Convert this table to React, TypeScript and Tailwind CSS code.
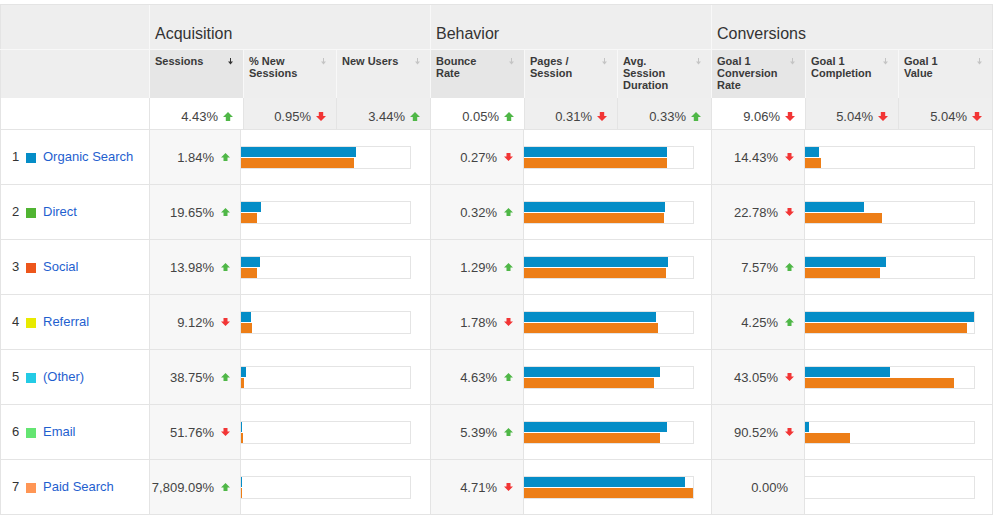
import React from "react";

type Dir = "up" | "down" | null;
type Cell = { v: string; a: Dir; b: [number, number] };
type Row = { n: number; color: string; label: string; g: Cell[] };

const rows: Row[] = [
  { n: 1, color: "#058dc7", label: "Organic Search", g: [
    { v: "1.84%", a: "up", b: [115, 113] },
    { v: "0.27%", a: "down", b: [143, 143] },
    { v: "14.43%", a: "down", b: [14, 16] },
  ] },
  { n: 2, color: "#50b432", label: "Direct", g: [
    { v: "19.65%", a: "up", b: [20, 16] },
    { v: "0.32%", a: "up", b: [141, 140] },
    { v: "22.78%", a: "down", b: [59, 77] },
  ] },
  { n: 3, color: "#ed561b", label: "Social", g: [
    { v: "13.98%", a: "up", b: [19, 16] },
    { v: "1.29%", a: "up", b: [144, 142] },
    { v: "7.57%", a: "up", b: [81, 75] },
  ] },
  { n: 4, color: "#e8ea00", label: "Referral", g: [
    { v: "9.12%", a: "down", b: [10, 11] },
    { v: "1.78%", a: "down", b: [132, 134] },
    { v: "4.25%", a: "up", b: [169, 162] },
  ] },
  { n: 5, color: "#24cbe5", label: "(Other)", g: [
    { v: "38.75%", a: "up", b: [5, 3] },
    { v: "4.63%", a: "up", b: [136, 130] },
    { v: "43.05%", a: "down", b: [85, 149] },
  ] },
  { n: 6, color: "#64e572", label: "Email", g: [
    { v: "51.76%", a: "down", b: [1, 2] },
    { v: "5.39%", a: "up", b: [143, 136] },
    { v: "90.52%", a: "down", b: [4, 45] },
  ] },
  { n: 7, color: "#ff9655", label: "Paid Search", g: [
    { v: "7,809.09%", a: "up", b: [1, 1] },
    { v: "4.71%", a: "down", b: [161, 169] },
    { v: "0.00%", a: null, b: [0, 0] },
  ] },
];

const groups = [
  {
    title: "Acquisition",
    cols: [
      { lines: ["Sessions"], sorted: true },
      { lines: ["% New", "Sessions"], sorted: false },
      { lines: ["New Users"], sorted: false },
    ],
    sums: [
      { v: "4.43%", a: "up" as Dir },
      { v: "0.95%", a: "down" as Dir },
      { v: "3.44%", a: "up" as Dir },
    ],
  },
  {
    title: "Behavior",
    cols: [
      { lines: ["Bounce", "Rate"], sorted: false },
      { lines: ["Pages /", "Session"], sorted: false },
      { lines: ["Avg.", "Session", "Duration"], sorted: false },
    ],
    sums: [
      { v: "0.05%", a: "up" as Dir },
      { v: "0.31%", a: "down" as Dir },
      { v: "0.33%", a: "up" as Dir },
    ],
  },
  {
    title: "Conversions",
    cols: [
      { lines: ["Goal 1", "Conversion", "Rate"], sorted: false },
      { lines: ["Goal 1", "Completion"], sorted: false },
      { lines: ["Goal 1", "Value"], sorted: false },
    ],
    sums: [
      { v: "9.06%", a: "down" as Dir },
      { v: "5.04%", a: "down" as Dir },
      { v: "5.04%", a: "down" as Dir },
    ],
  },
];

const subW = ["w-[94px]", "w-[93px]", "w-[94px]"];
const valW = ["w-[91px]", "w-[93px]", "w-[93px]"];
const barW = ["w-[190px]", "w-[188px]", "w-[188px]"];

function Arrow({ dir, big }: { dir: Dir; big?: boolean }) {
  if (!dir) return null;
  const w = big ? 10 : 9;
  const h = big ? 9 : 8;
  const color = dir === "up" ? "#4fb747" : "#f23535";
  const mid = w / 2;
  const headH = big ? 5 : 4.5;
  const s1 = big ? 2.8 : 2.5;
  const s2 = w - s1;
  const pts =
    dir === "up"
      ? `${mid},0 ${w},${headH} ${s2},${headH} ${s2},${h} ${s1},${h} ${s1},${headH} 0,${headH}`
      : `${s1},0 ${s2},0 ${s2},${h - headH} ${w},${h - headH} ${mid},${h} 0,${h - headH} ${s1},${h - headH}`;
  return (
    <svg width={w} height={h} viewBox={`0 0 ${w} ${h}`} className="shrink-0">
      <polygon points={pts} fill={color} />
    </svg>
  );
}

function SortArrow({ dark }: { dark: boolean }) {
  const c = dark ? "#333333" : "#c4c4c4";
  return (
    <svg width="5" height="7" viewBox="0 0 5 7" className="shrink-0 mt-[3px]">
      <rect x="2" y="0" width="1" height="4" fill={c} />
      <polygon points="0,3.5 5,3.5 2.5,6.5" fill={c} />
    </svg>
  );
}

export default function App() {
  return (
    <div className="w-[993px] h-[517px] bg-white pt-[4px] font-['Liberation_Sans',Arial,sans-serif] text-[#333]">
      <div className="border-t border-[#e4e4e4]">
        {/* Group title row */}
        <div className="flex h-[45px] bg-[#eeeeee] border-b border-[#f8f8f8]">
          <div className="w-[150px] border-l border-l-[#e4e4e4] border-r border-r-[#f8f8f8]" />
          {groups.map((g, i) => (
            <div
              key={g.title}
              className={`w-[281px] border-r flex items-end pl-[5px] pb-[6px] ${i === 2 ? "border-r-[#e4e4e4]" : "border-r-[#f8f8f8]"}`}
            >
              <span className="text-[16px] leading-[18px]">{g.title}</span>
            </div>
          ))}
        </div>
        {/* Column header row */}
        <div className="flex h-[48px] bg-[#eeeeee]">
          <div className="w-[150px] border-l border-l-[#e4e4e4] border-r border-r-[#f8f8f8]" />
          {groups.map((g, gi) => (
            <div key={g.title} className="w-[281px] flex">
              {g.cols.map((c, ci) => (
                <div
                  key={ci}
                  className={`${subW[ci]} border-r ${gi === 2 && ci === 2 ? "border-r-[#e4e4e4]" : "border-r-[#f8f8f8]"} ${ci === 0 ? "bg-[#e6e6e6]" : ""} flex items-start justify-between pl-[5px] pr-[10px] pt-[5px]`}
                >
                  <div className="text-[11px] leading-[12px] font-bold text-[#3a3a3a] whitespace-nowrap">
                    {c.lines.map((l, li) => (
                      <div key={li}>{l}</div>
                    ))}
                  </div>
                  <SortArrow dark={c.sorted} />
                </div>
              ))}
            </div>
          ))}
        </div>
        {/* Summary row */}
        <div className="flex h-[32px] border-b border-[#e4e4e4]">
          <div className="w-[150px] bg-white border-l border-r border-[#e4e4e4]" />
          {groups.map((g) => (
            <div key={g.title} className="w-[281px] flex">
              {g.sums.map((s, si) => (
                <div
                  key={si}
                  className={`${subW[si]} border-r border-[#e4e4e4] ${si === 0 ? "bg-white" : "bg-[#efefef]"} flex items-center justify-end gap-[5px] pr-[10px] pt-[6px]`}
                >
                  <span className="text-[13px] leading-[15px] text-[#444]">{s.v}</span>
                  <Arrow dir={s.a} big />
                </div>
              ))}
            </div>
          ))}
        </div>
        {/* Data rows */}
        {rows.map((r) => (
          <div key={r.n} className="flex h-[55px] border-b border-[#e4e4e4]">
            <div className="w-[150px] border-l border-r border-[#e4e4e4] flex items-center pl-[11px] text-[13px]">
              <span className="w-[14px] text-[#333]">{r.n}</span>
              <span className="w-[10px] h-[10px] mt-[1px]" style={{ backgroundColor: r.color }} />
              <span className="ml-[7px] text-[#1f5fcf]">{r.label}</span>
            </div>
            {r.g.map((c, gi) => (
              <div key={gi} className="w-[281px] flex">
                <div
                  className={`${valW[gi]} bg-[#f7f7f7] border-r border-[#e4e4e4] flex items-center justify-end gap-[7px] ${c.a ? "pr-[10px]" : "pr-[16px]"}`}
                >
                  <span className="text-[13px] leading-[15px] text-[#444] whitespace-nowrap">{c.v}</span>
                  <Arrow dir={c.a} />
                </div>
                <div className={`${barW[gi]} border-r border-[#e4e4e4] flex items-center`}>
                  <div className="w-[170px] h-[23px] border-y border-r border-[#e4e4e4] bg-white flex flex-col gap-[1px]">
                    <div className="h-[10px] bg-[#058dc7]" style={{ width: c.b[0] }} />
                    <div className="h-[10px] bg-[#ed7e17]" style={{ width: c.b[1] }} />
                  </div>
                </div>
              </div>
            ))}
          </div>
        ))}
      </div>
    </div>
  );
}
